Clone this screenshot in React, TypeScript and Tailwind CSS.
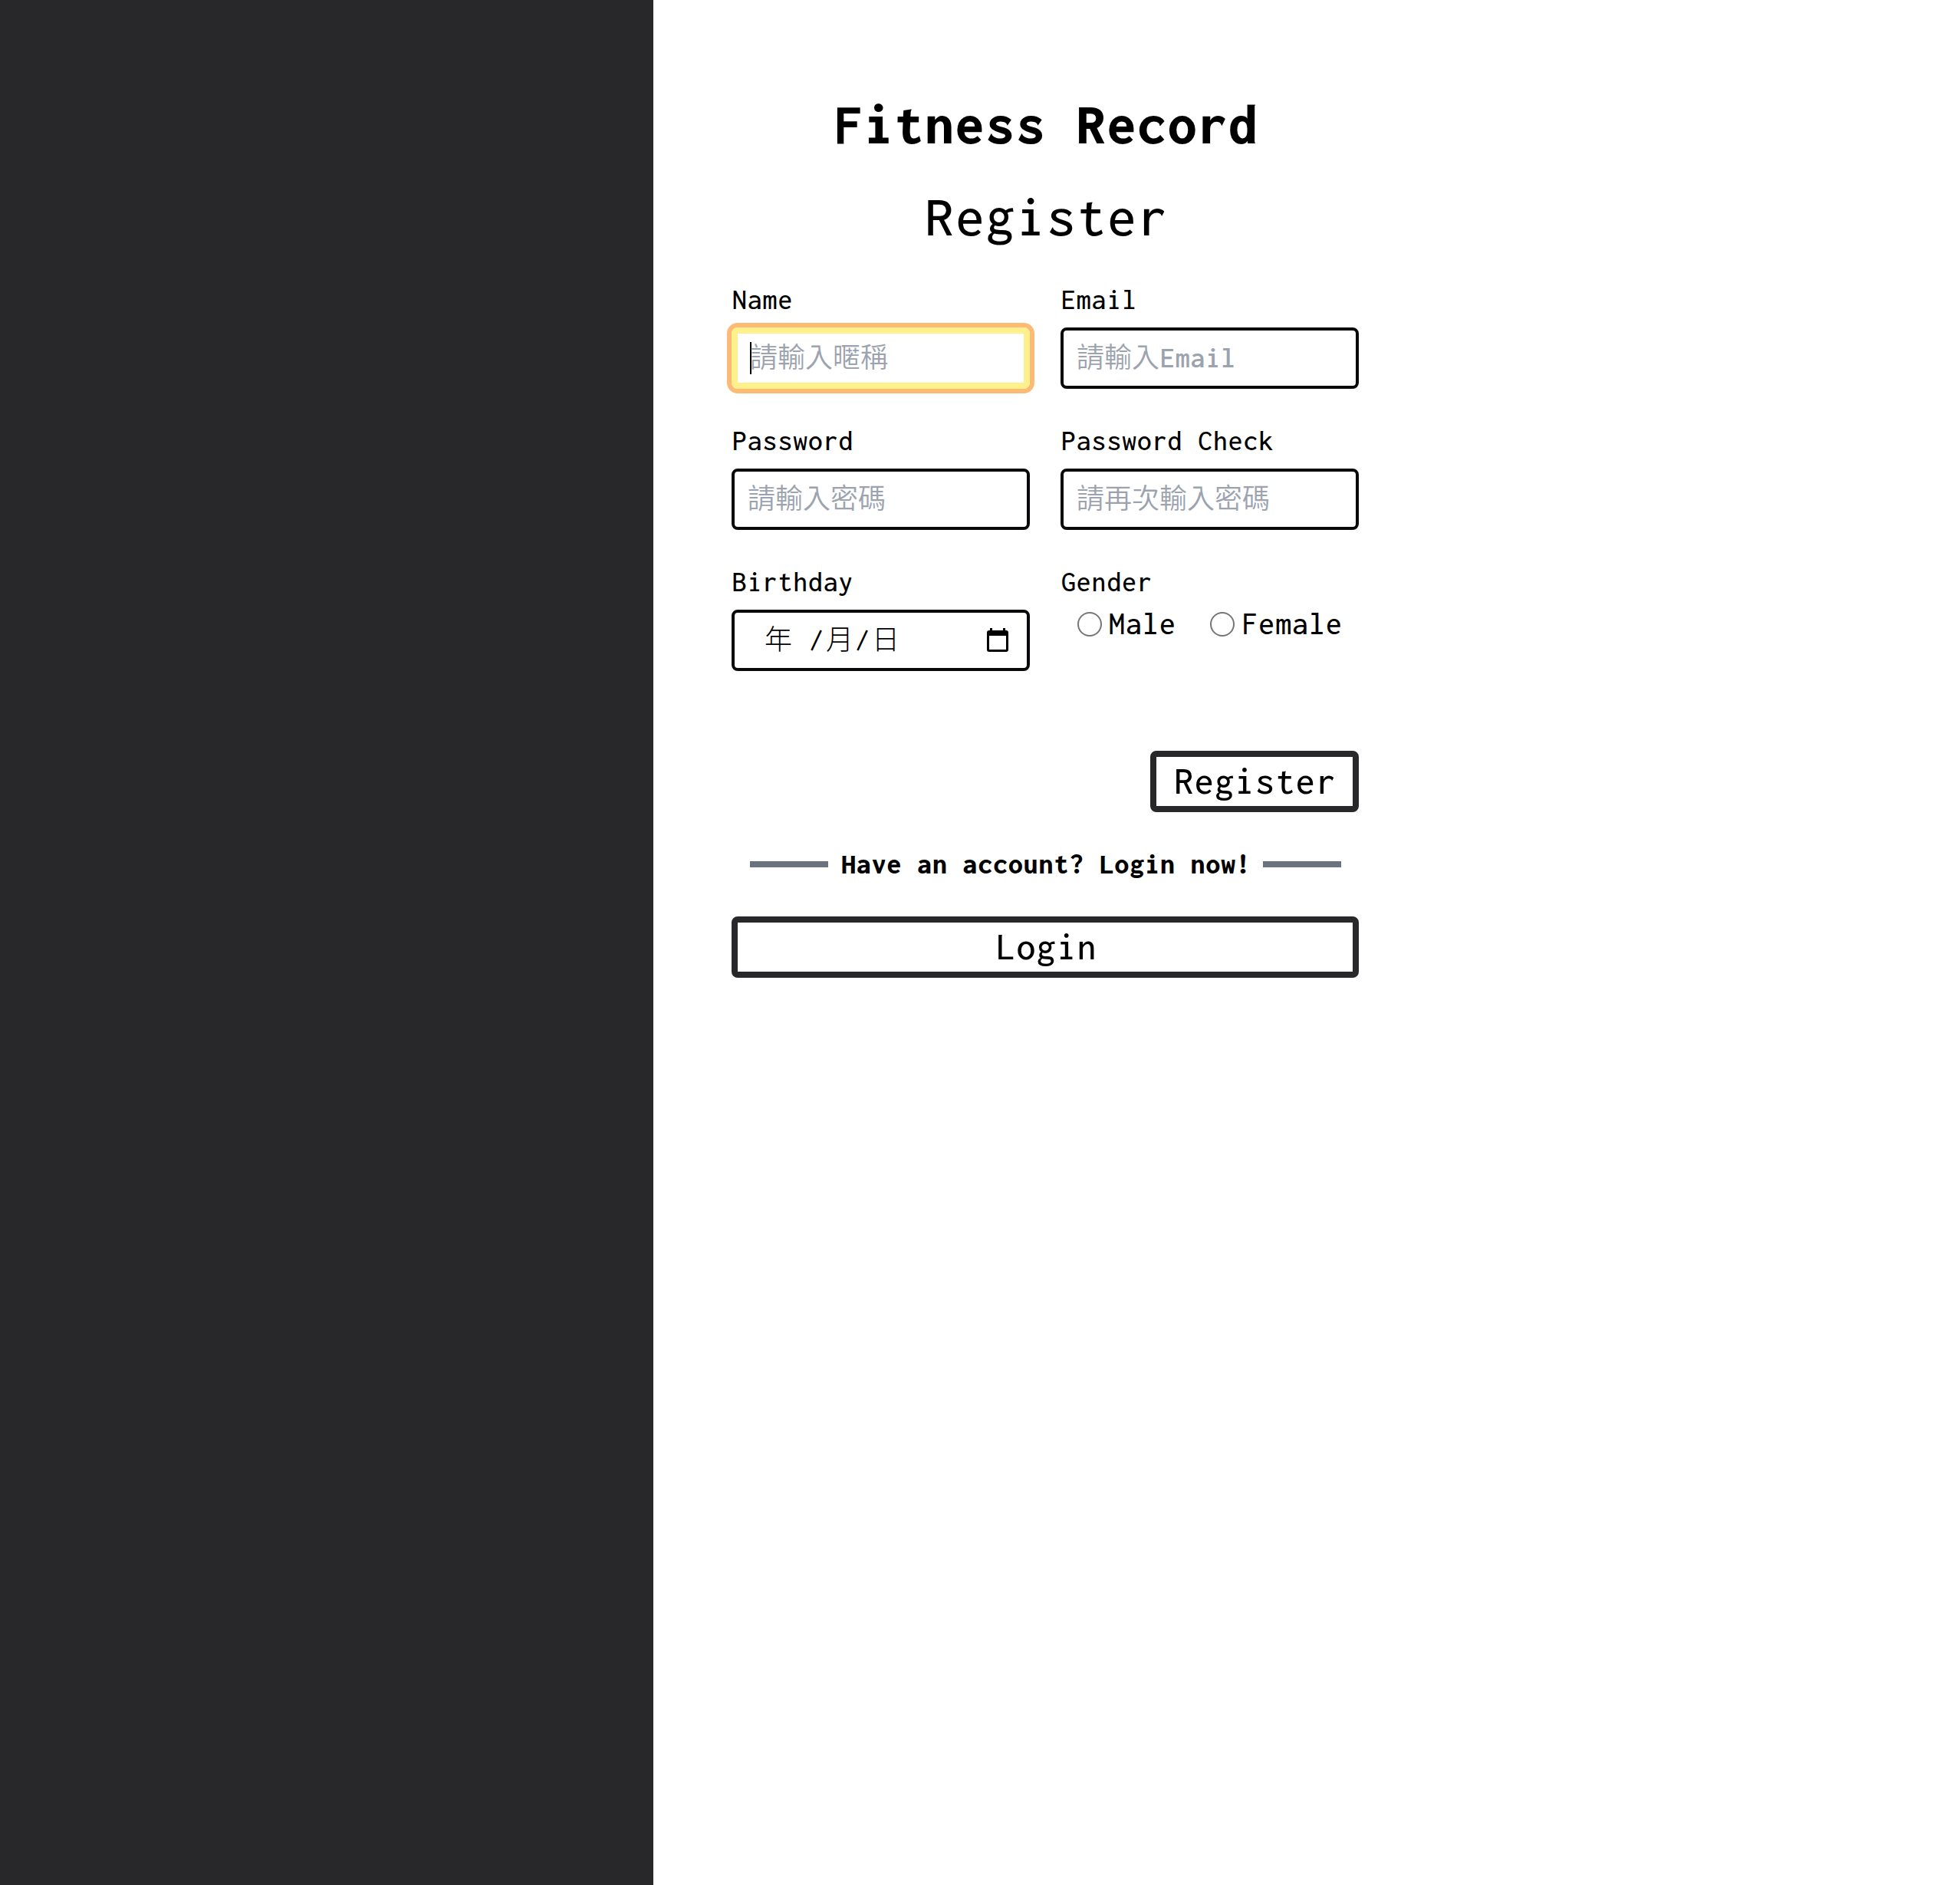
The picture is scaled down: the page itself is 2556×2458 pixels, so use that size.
import type { ReactNode } from 'react';

function Field({ label, children }: { label: string; children: ReactNode }) {
  return (
    <div className="flex h-[184px] flex-col">
      <span className="h-[56px] pl-px text-[37.5px] font-[450] leading-[47px] tracking-[0.028em]">{label}</span>
      {children}
    </div>
  );
}

function TextBox({ children }: { children: ReactNode }) {
  return (
    <div className="mt-1 flex h-20 items-center rounded-lg border-4 border-[#09090b] pb-2 pl-[17px] font-['Noto_Sans_CJK_TC',sans-serif] text-[36px] font-[350] leading-[64px] text-[#9ca3af]">
      {children}
    </div>
  );
}

function CalendarIcon() {
  return (
    <svg className="mr-6 h-8 w-7" viewBox="0 0 28 32" fill="none">
      <path
        fill="#000"
        fillRule="evenodd"
        d="M4 0h3v3h14V0h3v3h1a3 3 0 0 1 3 3v22a3 3 0 0 1-3 3H3a3 3 0 0 1-3-3V6a3 3 0 0 1 3-3h1V0ZM3 10v18h22V10H3Z"
      />
    </svg>
  );
}

function Slash() {
  return (
    <span className="mt-1.5 w-6 pr-px text-center font-['Inconsolata','Liberation_Mono',monospace] text-[39px] font-normal">
      /
    </span>
  );
}

function Radio({ label }: { label: string }) {
  return (
    <label className="flex items-center text-[41.6px] leading-[56px] tracking-[0.028em]">
      <span className="mr-[9px] size-8 rounded-full border-2 border-[#767676]" />
      <span className="-mt-0.5">{label}</span>
    </label>
  );
}

export default function App() {
  return (
    <div className="grid h-[2458px] grid-cols-3 bg-white font-['Inconsolata','Liberation_Mono',monospace] font-medium text-black">
      <aside className="bg-[#28282a]" />
      <main className="col-span-2 pl-[102px] pt-[102px]">
        <div className="flex w-[818px] flex-col">
          <h1 className="h-[120px] pl-[3px] text-center text-[75px] font-extrabold leading-[120px] tracking-[0.028em]">
            Fitness Record
          </h1>
          <h2 className="h-[120px] pl-1 text-center text-[75px] leading-[120px] tracking-[0.028em]">Register</h2>

          <form className="mt-[25px] grid grid-cols-2 gap-x-10">
            <Field label="Name">
              <div className="mt-1 flex h-20 items-center rounded-lg border-8 border-[#fef08a] pl-4 font-['Noto_Sans_CJK_TC',sans-serif] text-[36px] font-[350] leading-[56px] text-[#9ca3af] ring-6 ring-[#fdba74]">
                <span className="h-[42px] w-0.5 bg-black" />
                <span className="-ml-0.5 pb-2">請輸入暱稱</span>
              </div>
            </Field>
            <Field label="Email">
              <TextBox>
                請輸入
                <span className="mt-2 pl-px font-['Inconsolata','Liberation_Mono',monospace] text-[37.5px] font-semibold tracking-[0.028em]">
                  Email
                </span>
              </TextBox>
            </Field>
            <Field label="Password">
              <TextBox>請輸入密碼</TextBox>
            </Field>
            <Field label="Password Check">
              <TextBox>請再次輸入密碼</TextBox>
            </Field>
            <Field label="Birthday">
              <div className="mt-1 flex h-20 items-center justify-between rounded-lg border-4 border-[#09090b] pl-[39px] font-['Noto_Sans_CJK_TC',sans-serif] text-[36px] font-light leading-[64px]">
                <span className="flex items-center pb-2">
                  <span className="mr-5">年</span>
                  <Slash />
                  月
                  <Slash />
                  日
                </span>
                <CalendarIcon />
              </div>
            </Field>
            <Field label="Gender">
              <div className="-mt-1 flex items-center justify-between pl-[22px] pr-[21px]">
                <Radio label="Male" />
                <Radio label="Female" />
              </div>
            </Field>
          </form>

          <button className="mt-[60px] h-20 w-[272px] self-end rounded-lg border-8 border-[#28282a] pl-0.5 text-[50px] leading-[64px] tracking-[0.028em]">
            Register
          </button>

          <div className="mt-10 flex h-14 items-center pl-6 pr-[23px] text-[37.5px] font-extrabold leading-[56px] tracking-[0.028em]">
            <span className="h-2 flex-1 bg-[#6b7280]" />
            <span className="ml-[17px] mr-[15px]">Have an account? Login now!</span>
            <span className="h-2 flex-1 bg-[#6b7280]" />
          </div>

          <button className="mt-10 h-20 rounded-lg border-8 border-[#28282a] pl-1 text-[50px] leading-[64px] tracking-[0.028em]">
            Login
          </button>
        </div>
      </main>
    </div>
  );
}
